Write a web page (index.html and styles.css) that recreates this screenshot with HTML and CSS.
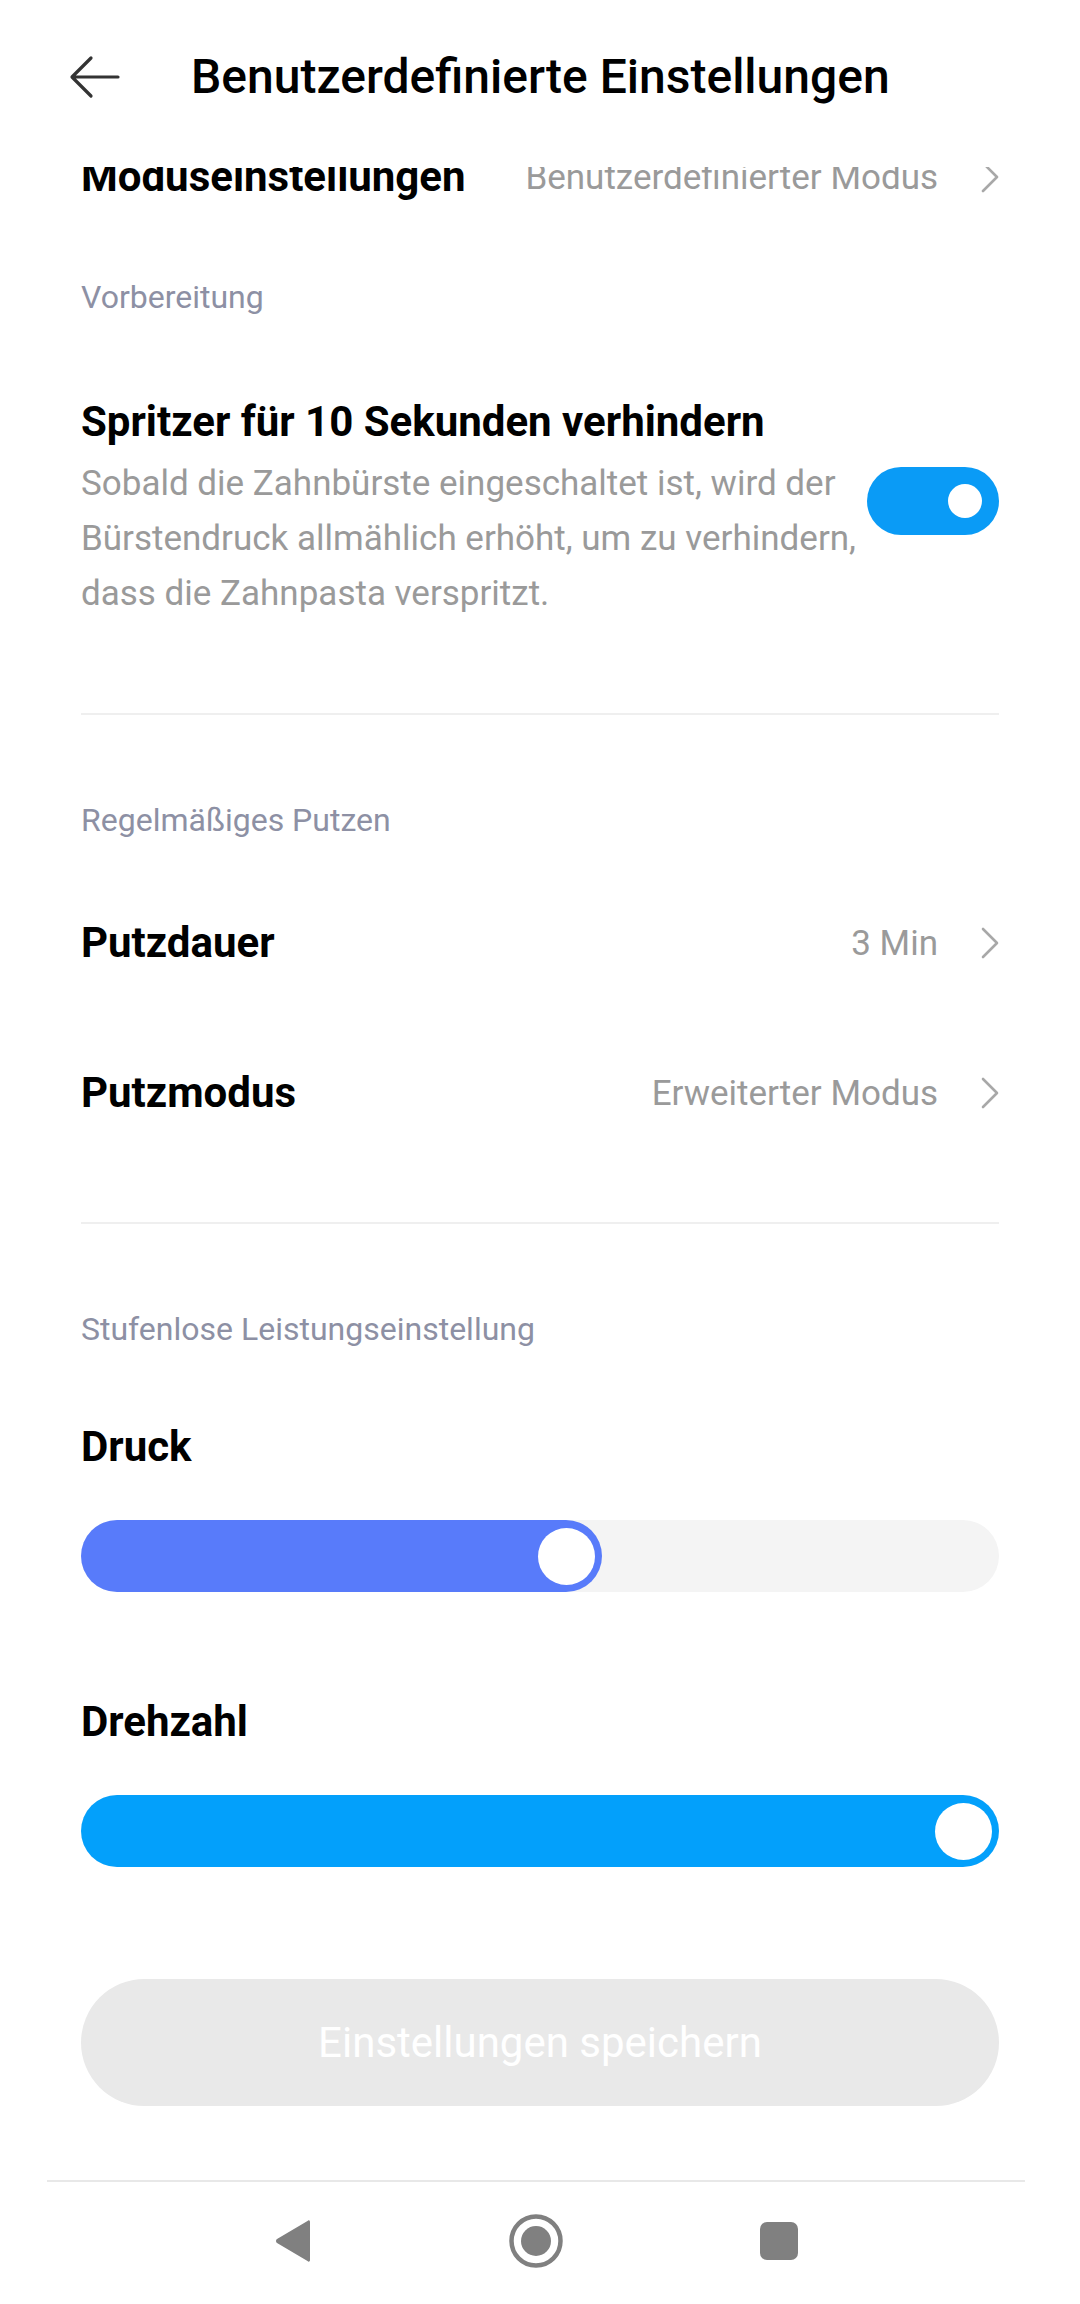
FILE: index.html
```html
<!DOCTYPE html>
<html lang="de">
<head>
    <meta charset="UTF-8">
    <meta name="viewport" content="width=device-width, initial-scale=1.0">
    <title>Benutzerdefinierte Einstellungen</title>
    <link rel="stylesheet" href="styles.css">
</head>
<body>
    <div class="screen">
        <header class="topbar">
            <svg class="back" width="56" height="44" viewBox="0 0 56 44">
                <path d="M50 22H5M23 3L4 22l19 19" fill="none" stroke="#333" stroke-width="3.2" stroke-linecap="round" stroke-linejoin="round"/>
            </svg>
            <h1>Benutzerdefinierte Einstellungen</h1>
        </header>

        <main class="scroller">
            <div class="content">
                <div class="row">
                    <span class="row-title">Moduseinstellungen</span>
                    <span class="row-value">Benutzerdefinierter Modus</span>
                    <svg class="chevron" width="20" height="32" viewBox="0 0 20 32"><path d="M3 2l14 14L3 30" fill="none" stroke="#a8a8a8" stroke-width="2.6" stroke-linecap="round" stroke-linejoin="round"/></svg>
                </div>

                <section class="group">
                    <p class="label label-first">Vorbereitung</p>
                    <div class="toggle-item">
                        <div class="toggle-text">
                            <h3 class="row-title">Spritzer für 10 Sekunden verhindern</h3>
                            <p class="desc">Sobald die Zahnbürste eingeschaltet ist, wird der Bürstendruck allmählich erhöht, um zu verhindern, dass die Zahnpasta verspritzt.</p>
                        </div>
                        <div class="switch on"><span class="knob"></span></div>
                    </div>
                </section>

                <section class="group rows">
                    <p class="label">Regelmäßiges Putzen</p>
                    <div class="row">
                        <span class="row-title">Putzdauer</span>
                        <span class="row-value">3 Min</span>
                        <svg class="chevron" width="20" height="32" viewBox="0 0 20 32"><path d="M3 2l14 14L3 30" fill="none" stroke="#a8a8a8" stroke-width="2.6" stroke-linecap="round" stroke-linejoin="round"/></svg>
                    </div>
                    <div class="row">
                        <span class="row-title">Putzmodus</span>
                        <span class="row-value">Erweiterter Modus</span>
                        <svg class="chevron" width="20" height="32" viewBox="0 0 20 32"><path d="M3 2l14 14L3 30" fill="none" stroke="#a8a8a8" stroke-width="2.6" stroke-linecap="round" stroke-linejoin="round"/></svg>
                    </div>
                </section>

                <section class="group last">
                    <p class="label">Stufenlose Leistungseinstellung</p>

                    <h3 class="row-title slider-title">Druck</h3>
                    <div class="slider">
                        <div class="fill fill-pressure" style="width: 56.8%"><span class="handle"></span></div>
                    </div>

                    <h3 class="row-title slider-title second">Drehzahl</h3>
                    <div class="slider">
                        <div class="fill fill-speed" style="width: 100%"><span class="handle"></span></div>
                    </div>

                    <button class="save" type="button">Einstellungen speichern</button>
                </section>
            </div>
        </main>

        <nav class="navbar">
            <div class="nav-slot">
                <svg width="44" height="48" viewBox="0 0 44 48"><path d="M39 5v38c0 1.6-1.5 2.2-2.5 1L5.6 25.8a3 3 0 0 1 0-3.6L36.5 4c1-1.2 2.5-0.6 2.5 1z" fill="#808080"/></svg>
            </div>
            <div class="nav-slot">
                <svg width="58" height="58" viewBox="0 0 58 58"><circle cx="29" cy="29" r="24.5" fill="none" stroke="#808080" stroke-width="4.5"/><circle cx="29" cy="29" r="15" fill="#808080"/></svg>
            </div>
            <div class="nav-slot">
                <svg width="40" height="40" viewBox="0 0 40 40"><rect x="1" y="1" width="38" height="38" rx="7" fill="#808080"/></svg>
            </div>
        </nav>
    </div>
</body>
</html>
```

FILE: styles.css
```css
body {
    margin: 0;
    padding: 0;
    background-color: #fff;
    font-family: Roboto, "Noto Sans", Arial, sans-serif;
    color: #000;
}

.screen {
    width: 1080px;
    height: 2304px;
    display: flex;
    flex-direction: column;
    overflow: hidden;
}

.topbar {
    height: 167px;
    flex-shrink: 0;
    display: flex;
    align-items: center;
    padding: 0 0 14px 68px;
    box-sizing: border-box;
    background-color: #fff;
    position: relative;
    z-index: 2;
}

.topbar h1 {
    margin: 0 0 0 67px;
    font-size: 48px;
    font-weight: 500;
}

.back {
    display: block;
}

.scroller {
    flex: 1;
    overflow: hidden;
}

/* list is scrolled up a little, the first row sits under the header */
.content {
    margin-top: -65px;
    padding: 0 81px;
}

.row {
    height: 150px;
    display: flex;
    align-items: center;
}

.row-title {
    margin: 0;
    font-size: 42px;
    font-weight: 700;
    line-height: 56px;
}

.row-value {
    margin-left: auto;
    font-size: 35px;
    color: #9a9a9a;
}

.chevron {
    margin-left: 42px;
    margin-right: -1px;
    display: block;
}

.group {
    border-bottom: 2px solid #efefef;
}

.group.rows {
    padding-bottom: 54px;
}

.group.last {
    border-bottom: none;
}

.label {
    margin: 0;
    padding: 85px 0 28px;
    font-size: 32px;
    line-height: 40px;
    color: #8d90a4;
}

.label-first {
    padding-top: 25px;
}

.toggle-item {
    display: flex;
    align-items: center;
    padding: 49px 0 92px;
}

.toggle-text {
    width: 790px;
}

.desc {
    margin: 6px 0 0;
    font-size: 35px;
    line-height: 55px;
    color: #9a9a9a;
}

.switch {
    width: 132px;
    height: 68px;
    margin-left: auto;
    margin-bottom: 14px;
    border-radius: 34px;
    background-color: #0a9bf6;
    display: flex;
    align-items: center;
    justify-content: flex-end;
    padding: 0 17px;
    box-sizing: border-box;
}

.knob {
    width: 34px;
    height: 34px;
    border-radius: 50%;
    background-color: #fff;
}

.slider-title {
    margin-top: 42px;
}

.slider-title.second {
    margin-top: 102px;
}

.slider {
    margin-top: 45px;
    height: 72px;
    border-radius: 36px;
    background-color: #f4f4f4;
}

.fill {
    height: 100%;
    border-radius: 36px;
    display: flex;
    align-items: center;
    justify-content: flex-end;
    padding-right: 7px;
    box-sizing: border-box;
}

.fill-pressure {
    background-color: #587bfa;
}

.fill-speed {
    background-color: #03a0fb;
}

.handle {
    width: 57px;
    height: 57px;
    border-radius: 50%;
    background-color: #fff;
}

.save {
    display: block;
    width: 100%;
    height: 127px;
    margin-top: 112px;
    border: none;
    border-radius: 64px;
    background-color: #e9e9e9;
    color: #fff;
    font-family: Roboto, "Noto Sans", Arial, sans-serif;
    font-size: 42px;
}

.navbar {
    height: 124px;
    flex-shrink: 0;
    margin: 0 55px 0 47px;
    border-top: 2px solid #e8e8e8;
    display: flex;
    justify-content: center;
    align-items: center;
    padding-bottom: 4px;
    box-sizing: border-box;
}

.nav-slot {
    width: 243px;
    display: flex;
    justify-content: center;
}

.nav-slot svg {
    display: block;
}
```
